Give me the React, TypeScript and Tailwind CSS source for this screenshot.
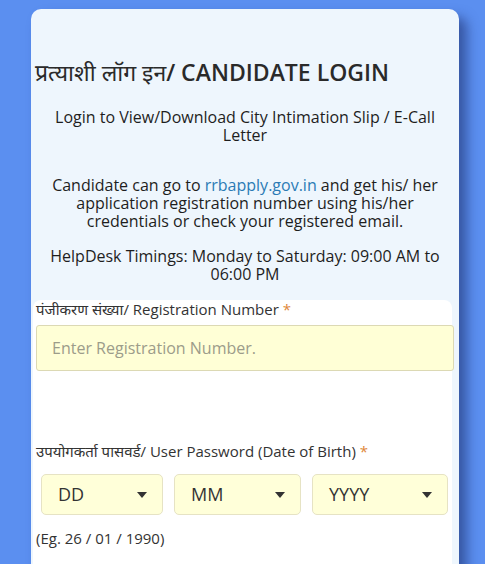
// Candidate login card (RRB city intimation / e-call letter)
const font = { fontFamily: '"Open Sans", "Noto Sans", sans-serif' };

function Caret() {
  return (
    <svg width="10" height="6" viewBox="0 0 10 6" className="shrink-0">
      <path d="M0 0h10L5 6z" fill="#333" />
    </svg>
  );
}

function DateSelect({ label, width }: { label: string; width: string }) {
  return (
    <div
      className={`${width} h-[41px] flex items-center justify-between pl-[16px] pr-[15px] rounded-[5px] border border-[#e6e3c4] bg-[#ffffd9] text-[18px] text-[#333]`}
    >
      <span>{label}</span>
      <Caret />
    </div>
  );
}

export default function App() {
  return (
    <div className="min-h-screen bg-[#5b8ff0] pt-[9px] pl-[31px] overflow-hidden" style={font}>
      <div className="w-[428px] bg-[#eef6fd] rounded-[10px] shadow-[8px_8px_12px_rgba(25,40,100,0.55)] pt-[48px] pb-[80px]">
        {/* Header */}
        <h1 className="pl-[4px] text-[23px] leading-[30px] font-semibold text-[#2a2a2a]">
          <span className="font-normal">प्रत्याशी लॉग इन</span>/ CANDIDATE LOGIN
        </h1>

        <div className="px-[10px] text-center text-[16px] leading-[18px] font-medium text-[#1e1e1e]">
          <p className="mt-[21px]">Login to View/Download City Intimation Slip / E-Call Letter</p>
          <p className="mt-[32px]">
            Candidate can go to <a className="text-[#2b7bb5]" href="#">rrbapply.gov.in</a> and get his/ her
            application registration number using his/her credentials or check your registered email.
          </p>
          <p className="mt-[17px]">HelpDesk Timings: Monday to Saturday: 09:00 AM to 06:00 PM</p>
        </div>

        {/* Form */}
        <div className="mt-[17px] ml-[2px] mr-[7px] bg-white rounded-t-[8px] pl-[3px] pr-0 pb-[20px] text-[#333]">
          <label className="block text-[15px] leading-[18px]">
            पंजीकरण संख्या/ Registration Number <span className="text-[#e0873a]">*</span>
          </label>
          <input
            className="mt-[7px] w-[418px] h-[46px] px-[15px] rounded-[3px] border border-[#dcd9b4] bg-[#ffffd6] text-[16px] placeholder:text-[#9c9c8a] outline-none"
            placeholder="Enter Registration Number."
          />

          <label className="block mt-[71px] text-[15px] leading-[18px]">
            उपयोगकर्ता पासवर्ड/ User Password (Date of Birth) <span className="text-[#e0873a]">*</span>
          </label>
          <div className="mt-[14px] pl-[5px] flex gap-[11px]">
            <DateSelect label="DD" width="w-[122px]" />
            <DateSelect label="MM" width="w-[127px]" />
            <DateSelect label="YYYY" width="w-[136px]" />
          </div>
          <p className="mt-[14px] text-[15px] leading-[18px]">(Eg. 26 / 01 / 1990)</p>
        </div>
      </div>
    </div>
  );
}
